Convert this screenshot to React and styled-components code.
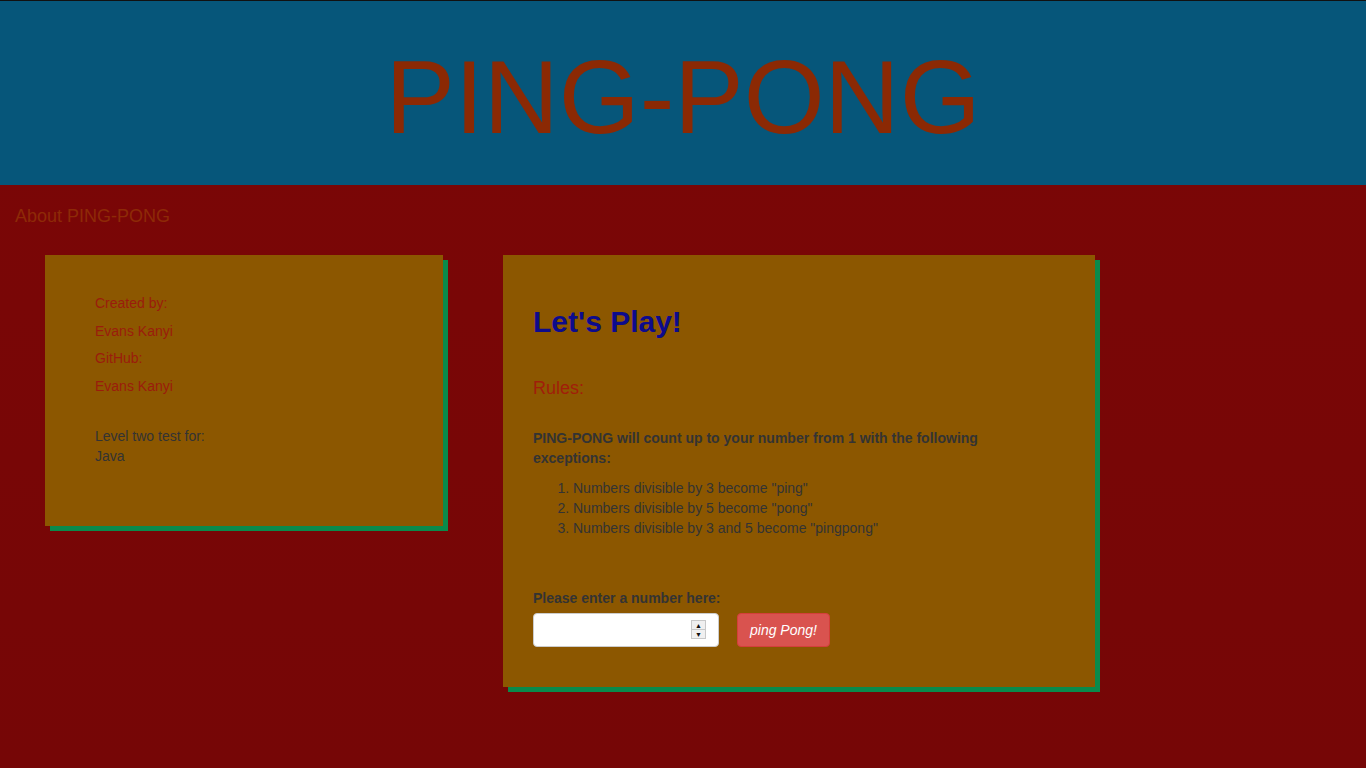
import React, { useState } from 'react'
import styled, { createGlobalStyle } from 'styled-components'

const GlobalStyle = createGlobalStyle`
  html, body {
    margin: 0;
    padding: 0;
  }
  body {
    font-family: "Liberation Sans", Arial, Helvetica, sans-serif;
    font-size: 14px;
    line-height: 1.42857;
    color: #333;
    background: linear-gradient(to bottom, #7b0606, #760606);
    min-height: 768px;
  }
`

const Header = styled.header`
  height: 184px;
  border-top: 1px solid #111;
  background-color: #06567a;
  display: flex;
  align-items: center;
  justify-content: center;

  h1 {
    margin: 0;
    font-size: 104px;
    font-weight: normal;
    line-height: 1;
    color: #8b2904;
    letter-spacing: 0;
    padding-top: 8px;
  }
`

const About = styled.h4`
  margin: 0;
  padding: 21px 15px 0;
  font-size: 18px;
  font-weight: normal;
  line-height: 20px;
  color: #8e2a06;
`

const Row = styled.div`
  display: flex;
  align-items: flex-start;
  gap: 60px;
  padding: 29px 0 0 45px;
`

const Card = styled.div`
  background-color: #8c5700;
  box-shadow: 5px 5px 0 #0a8a4b;
  width: ${(p) => p.width}px;
  box-sizing: border-box;
`

const InfoCard = styled(Card)`
  padding: 38px 50px 60px;
`

const InfoLine = styled.p`
  margin: 0 0 7.5px;
  line-height: 20px;
  color: #9a1c0c;
`

const Level = styled.div`
  margin-top: 30.5px;
  line-height: 20px;
  color: #333;
`

const PlayCard = styled(Card)`
  padding: 50px 30px 40px;
`

const Title = styled.h2`
  margin: 0;
  font-size: 30px;
  line-height: 33px;
  font-weight: bold;
  color: #0d0b8c;
`

const Rules = styled.h4`
  margin: 40px 0 0;
  font-size: 18px;
  font-weight: normal;
  line-height: 20px;
  color: #a01e0a;
`

const Intro = styled.p`
  margin: 30px 0 10px;
  font-weight: bold;
  line-height: 20px;
  max-width: 470px;
`

const List = styled.ol`
  margin: 0;
  padding-left: 40px;
  line-height: 20px;
`

const Label = styled.label`
  display: block;
  margin: 50px 0 5px;
  font-weight: bold;
  line-height: 20px;
`

const FormRow = styled.div`
  display: flex;
  gap: 18px;
`

const InputWrap = styled.div`
  position: relative;
  width: 186px;
  height: 34px;
`

const Input = styled.input`
  width: 100%;
  height: 100%;
  box-sizing: border-box;
  border: 1px solid #ccc;
  border-radius: 4px;
  background: #fff;
  padding: 6px 12px;
  font-family: inherit;
  font-size: 14px;
  outline: none;
`

const Spinner = styled.div`
  position: absolute;
  right: 13px;
  top: 7px;
  width: 15px;
  height: 19px;
  display: flex;
  flex-direction: column;
  border: 1px solid #c8c8c8;
  box-sizing: border-box;
  background: #f0f0f0;

  span {
    flex: 1;
    display: flex;
    align-items: center;
    justify-content: center;
    font-size: 7px;
    line-height: 1;
    color: #111;
  }
  span + span {
    border-top: 1px solid #c8c8c8;
  }
`

const Button = styled.button`
  height: 34px;
  padding: 6px 12px;
  border: 1px solid #d43f3a;
  border-radius: 4px;
  background-color: #d9534f;
  color: #fff;
  font-family: inherit;
  font-size: 14px;
  font-style: italic;
  cursor: pointer;
`

export default function App() {
  const [num, setNum] = useState('')

  return (
    <>
      <GlobalStyle />
      <Header>
        <h1>PING-PONG</h1>
      </Header>
      <About>About PING-PONG</About>
      <Row>
        <InfoCard width={398}>
          <InfoLine>Created by:</InfoLine>
          <InfoLine>Evans Kanyi</InfoLine>
          <InfoLine>GitHub:</InfoLine>
          <InfoLine>Evans Kanyi</InfoLine>
          <Level>
            Level two test for:
            <br />
            Java
          </Level>
        </InfoCard>

        <PlayCard width={592}>
          <Title>Let's Play!</Title>
          <Rules>Rules:</Rules>
          <Intro>PING-PONG will count up to your number from 1 with the following exceptions:</Intro>
          <List>
            <li>Numbers divisible by 3 become "ping"</li>
            <li>Numbers divisible by 5 become "pong"</li>
            <li>Numbers divisible by 3 and 5 become "pingpong"</li>
          </List>
          <Label htmlFor="number">Please enter a number here:</Label>
          <FormRow>
            <InputWrap>
              <Input id="number" type="text" value={num} onChange={(e) => setNum(e.target.value)} />
              <Spinner>
                <span>▲</span>
                <span>▼</span>
              </Spinner>
            </InputWrap>
            <Button type="button">ping Pong!</Button>
          </FormRow>
        </PlayCard>
      </Row>
    </>
  )
}
